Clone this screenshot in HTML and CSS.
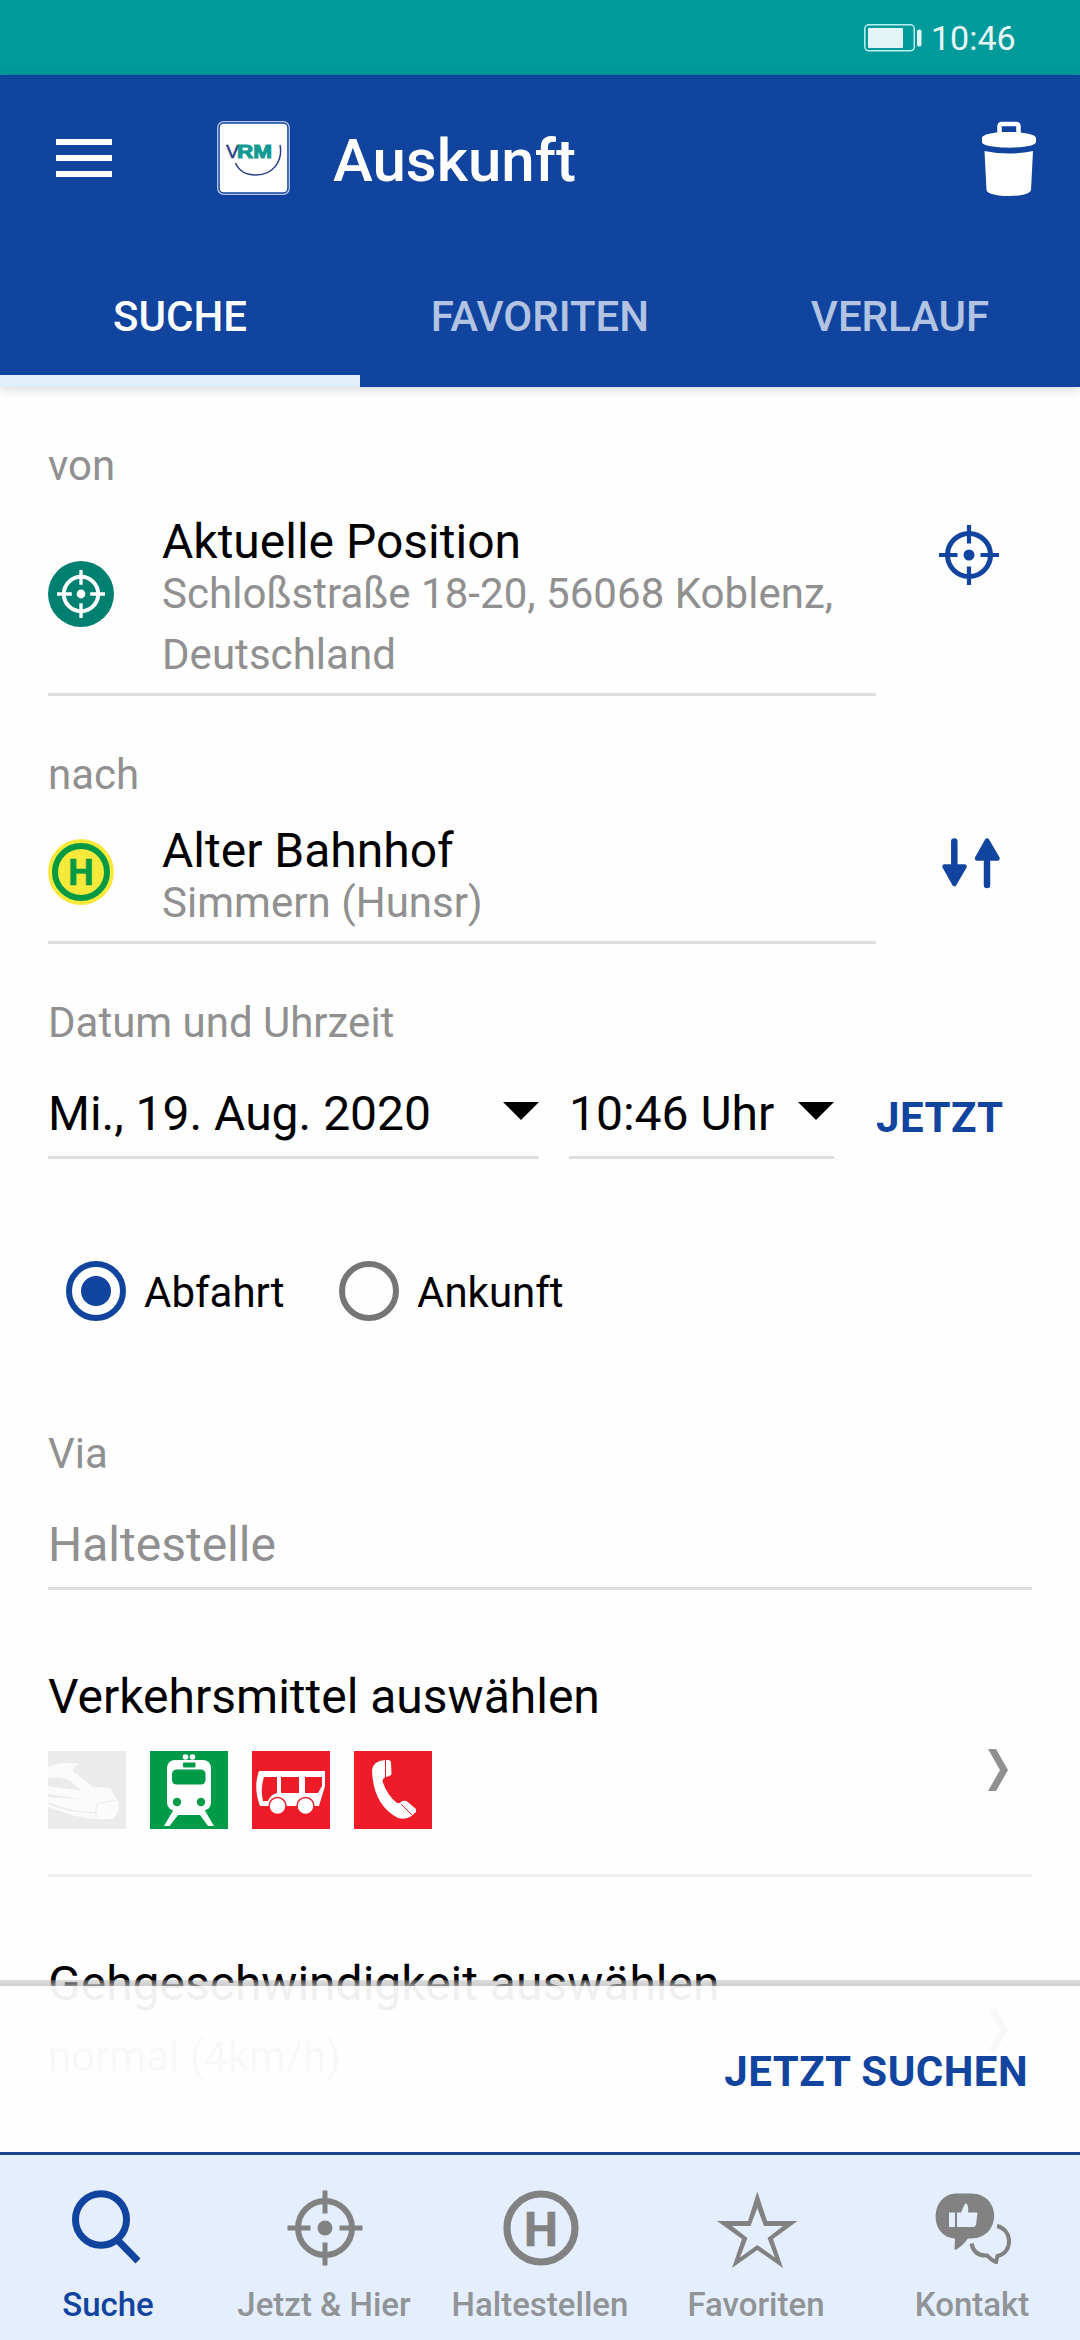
FILE: index.html
```html
<!DOCTYPE html>
<html lang="de">
<head>
<meta charset="utf-8">
<title>Auskunft</title>
<link rel="stylesheet" href="styles.css">
</head>
<body>
<svg width="0" height="0" class="defs">
  <symbol id="target" viewBox="0 0 60 60">
    <circle cx="30" cy="30" r="21.5" fill="none" stroke="currentColor" stroke-width="5"/>
    <circle cx="30" cy="30" r="5.5" fill="currentColor"/>
    <path d="M30 0v18.500M30 41.500V60M0 30h18.500M41.500 30H60" stroke="currentColor" stroke-width="4.200"/>
  </symbol>
  <symbol id="chevron" viewBox="0 0 20 42"><path d="M0 0h8l12 21-12 21H0l12-21z" fill="currentColor"/></symbol>
</svg>
<div class="phone">
  <div class="status">
    <svg width="55" height="28" viewBox="0 0 55 28">
      <rect x=".8" y=".8" width="49.500" height="26" rx="4" fill="none" stroke="#bdeeee" stroke-width="1.500"/>
      <rect x="4" y="4" width="35" height="20" rx="1" fill="#e3f5f5"/>
      <rect x="53" y="5.500" width="4.500" height="17" rx="2" fill="#e3f5f5"/>
    </svg>
    <span class="clock">10:46</span>
  </div>
  <header class="header">
    <div class="toolbar">
      <div class="menu"><i></i><i></i><i></i></div>
      <svg class="logo" width="73" height="74" viewBox="0 0 73 74">
        <rect x=".7" y=".7" width="71.600" height="72.600" rx="6" fill="#11449f" stroke="#b9c6e6" stroke-width="1.300"/>
        <rect x="2.800" y="2.800" width="67.400" height="68.400" rx="4" fill="#fff"/>
        <text x="9" y="37.200" class="logo-v" textLength="13" lengthAdjust="spacingAndGlyphs">V</text>
        <text x="20" y="37.200" class="logo-rm" textLength="35" lengthAdjust="spacingAndGlyphs">RM</text>
        <path d="M63 24C66 39 57 54 39 54 30 54 22 50 18.500 42" fill="none" stroke="#2c3f86" stroke-width="1.500"/>
      </svg>
      <h1>Auskunft</h1>
      <svg class="trash" width="54" height="76" viewBox="0 0 54 76">
        <path d="M17.500 14V5.500Q17.500 3 20 3h14q2.500 0 2.500 2.500V14" fill="none" stroke="#fff" stroke-width="4.500"/>
        <path d="M0 17C0 9 54 9 54 17v4C54 28.500 0 28.500 0 21z" fill="#fff"/>
        <path d="M2.500 30Q27 35 51 30L49 69C48 77 6 77 4.500 69z" fill="#fff"/>
      </svg>
    </div>
    <nav class="tabs">
      <span class="tab active">SUCHE</span><span class="tab">FAVORITEN</span><span class="tab">VERLAUF</span>
    </nav>
  </header>
  <main class="form">
    <label>von</label>
    <div class="row">
      <div class="field">
        <svg class="pin" width="66" height="66" viewBox="0 0 66 66"><circle cx="33" cy="33" r="33" fill="#008070"/><use href="#target" x="9" y="9" width="48" height="48" color="#fff"/></svg>
        <div><div class="title">Aktuelle Position</div><div class="sub">Schloßstraße 18-20, 56068 Koblenz, Deutschland</div></div>
      </div>
      <svg class="side" width="60" height="60"><use href="#target"/></svg>
    </div>
    <label>nach</label>
    <div class="row">
      <div class="field">
        <svg class="pin" width="66" height="66" viewBox="0 0 66 66"><circle cx="33" cy="33" r="33" fill="#f9e93b"/><circle cx="33" cy="33" r="26" fill="none" stroke="#009a44" stroke-width="6"/><text x="33" y="46" class="h-green">H</text></svg>
        <div><div class="title">Alter Bahnhof</div><div class="sub">Simmern (Hunsr)</div></div>
      </div>
      <svg class="side" width="60" height="60" viewBox="0 0 60 60" fill="#11449f" stroke="#11449f" stroke-linecap="round" stroke-linejoin="round">
        <path d="M15.300 7.500v22M48 51V28" stroke-width="6.500"/>
        <path d="M5.500 32.500h20L15.300 50zM38 24.500h20.500L48 6.500z" stroke-width="4.500"/>
      </svg>
    </div>
    <label>Datum und Uhrzeit</label>
    <div class="when">
      <div class="select date">Mi., 19. Aug. 2020<i class="caret"></i></div>
      <div class="select time">10:46 Uhr<i class="caret"></i></div>
      <span class="now">JETZT</span>
    </div>
    <div class="radios">
      <div class="radio on"><i></i><span>Abfahrt</span></div>
      <div class="radio"><i></i><span>Ankunft</span></div>
    </div>
    <label>Via</label>
    <div class="via">Haltestelle</div>
    <section class="option">
      <div>
        <div class="heading">Verkehrsmittel auswählen</div>
        <div class="modes">
          <svg viewBox="0 0 78 78"><path d="M0 0h78v78H0z" fill="#ebebeb"/><path d="M0 16C9 12 20 11 32 13L28 15Q24 17 25 20L45 36 62 37 70 50Q73 63 64 68 38 69 20 63L0 56z" fill="#fbfbfb"/><path d="M0 27Q17 25 26 33L34 40 0 35zM0 43L40 49H43L0 46zM0 51Q24 61 47 61L47 62.500Q22 62 0 53z" fill="#ebebeb"/><path d="M68 49L52 52Q48 53 48 57V67" fill="none" stroke="#ebebeb" stroke-width="1.200"/></svg>
          <svg viewBox="0 0 78 78"><path d="M0 0h78v78H0z" fill="#009b48"/><g fill="#fff"><circle cx="35.500" cy="6" r="2.800"/><circle cx="42.500" cy="6" r="2.800"/><rect x="17" y="9" width="44" height="50.500" rx="8"/><path d="M24 58h30L64 75h-6l-8-11H28l-8.500 11H14z"/></g><g fill="#009b48"><rect x="33" y="11.500" width="12.500" height="5" rx="1"/><rect x="22" y="18.500" width="33.500" height="15" rx="4.500"/><circle cx="27" cy="51" r="4.200"/><circle cx="51" cy="51" r="4.200"/></g></svg>
          <svg viewBox="0 0 78 78"><path d="M0 0h78v78H0z" fill="#ee1c28"/><path d="M7 20h66v15l-6 20H8Q1 36 7 20z" fill="#fff"/><path d="M12 26h13v16q-6 1-9 8h-5Q8 38 12 26zM29 26h18v16H29zM53 26h17v9l-4 7H53z" fill="#ee1c28"/><g fill="#fff" stroke="#ee1c28" stroke-width="1.500"><circle cx="25.500" cy="55" r="8.500"/><circle cx="53.500" cy="55" r="8.500"/></g></svg>
          <svg viewBox="0 0 78 78"><path d="M0 0h78v78H0z" fill="#ee1c28"/><path d="M31 9h3q3 0 3 3l.5 11q-.5 2-6 3-3 1-3 4.500 5 14 14 21 3 2 5-1 2-1 5-.5l9.500 8v3Q54 70 44 67 19 54 18 19 19 10 31 9z" fill="#fff"/><path d="M31.500 9v17M47.500 53.500l11 11" stroke="#ee1c28" stroke-width="1"/></svg>
        </div>
      </div>
      <svg class="chev" width="20" height="42"><use href="#chevron"/></svg>
    </section>
    <section class="option speed">
      <div><div class="heading">Gehgeschwindigkeit auswählen</div><div class="value">normal (4km/h)</div></div>
      <svg class="chev" width="20" height="42"><use href="#chevron"/></svg>
    </section>
  </main>
  <footer class="footer">
    <div class="edge"></div>
    <div class="actions"><span>JETZT SUCHEN</span></div>
    <nav class="bottom">
      <div class="item current"><svg viewBox="0 0 80 80"><ellipse cx="33" cy="31.500" rx="25.500" ry="25.700" fill="none" stroke="currentColor" stroke-width="7"/><path d="M49 51.500L70 73" stroke="currentColor" stroke-width="7"/></svg><span>Suche</span></div>
      <div class="item"><svg viewBox="0 0 80 80"><g stroke="currentColor" fill="none"><circle cx="41" cy="40" r="27" stroke-width="6"/><path d="M41 2.500v23M41 54.500v23M3.500 40h23M55.500 40h23" stroke-width="5"/></g><circle cx="41" cy="40" r="7.500" fill="currentColor"/></svg><span>Jetzt &amp; Hier</span></div>
      <div class="item"><svg viewBox="0 0 80 80"><circle cx="41" cy="40" r="34" fill="none" stroke="currentColor" stroke-width="7.200"/><text x="41" y="57.500" class="h-grey">H</text></svg><span>Haltestellen</span></div>
      <div class="item"><svg viewBox="0 0 80 80"><path fill="currentColor" fill-rule="evenodd" d="M41.300 3.500L51 33h30.500L57 51l10 29-25.700-18L16 80l10-29L1 33h31zM41.300 20L34.500 38H16L31.500 50 24 69.500 41.300 57 59 69.500 51.500 50 67 38H48z"/></svg><span>Favoriten</span></div>
      <div class="item"><svg viewBox="0 0 80 80"><path d="M24 5.500h15C70 5.500 70 50.500 39 50.500h-3Q29 60 22.500 62L23 50.500C-4 49 -2 6 24 5.500z" fill="currentColor"/><path d="M17 24.500h6v14.500h-6zM25 24.500h4l4-9q4-.5 3 9h9.500L44 37l-2 2H25z" fill="#e5eefd"/><path d="M65 38C80 41 82 64 65.500 68l-1.500 6q-2 0-9-6.500C45 68 41 63 39.500 55.500" fill="none" stroke="currentColor" stroke-width="4"/></svg><span>Kontakt</span></div>
    </nav>
  </footer>
</div>
</body>
</html>
```
FILE: styles.css
```css
* { box-sizing: border-box; }
body { margin: 0; font-family: Roboto, "Noto Sans", sans-serif; background: #fefefe; }
svg { display: block; flex: none; overflow: visible; }
.defs { position: absolute; }
.phone { position: relative; width: 1080px; height: 2340px; overflow: hidden; background: #fefefe; color: #000; }

.status { height: 75px; background: #009a9b; display: flex; justify-content: flex-end; align-items: center; gap: 12px; padding-right: 64px; }
.clock { color: #e8f8f8; font-size: 34px; line-height: 75px; padding-top: 2px; width: 85px; white-space: nowrap; }

.header { height: 312px; background: #11449f; color: #fff; box-shadow: 0 2px 10px rgba(0, 0, 0, .16); }
.toolbar { height: 168px; display: flex; align-items: flex-start; padding: 46px 44px 0 56px; }
.menu { width: 56px; display: flex; flex-direction: column; gap: 10px; padding-top: 18px; }
.menu i { height: 6px; background: #fff; }
.logo { margin-left: 105px; }
.logo-v { font: 18px "Liberation Sans", sans-serif; fill: #2c3f86; stroke: #2c3f86; stroke-width: .5px; }
.logo-rm { font: bold 18px "Liberation Sans", sans-serif; fill: #129a93; stroke: #129a93; stroke-width: 1px; }
h1 { margin: 0 0 0 43px; font-size: 60px; line-height: 80px; font-weight: 500; flex: 1; }
.tabs { display: grid; grid-template-columns: repeat(3, 1fr); height: 144px; }
.tab { text-align: center; font-size: 42px; font-weight: 500; line-height: 148px; color: #b3c3e2; height: 144px; }
.tab.active { color: #fff; border-bottom: 12px solid #e1effa; }

.form { padding: 54px 48px 0; }
label { display: block; font-size: 42px; line-height: 50px; color: #909090; }
.row { display: flex; align-items: flex-start; margin: 28px 0 54px; }
.field { width: 828px; display: flex; align-items: center; gap: 48px; padding-bottom: 8px; border-bottom: 3px solid #dedede; }
.pin { margin-bottom: 17px; }
.title { font-size: 48px; line-height: 42px; padding-top: 2px; }
.sub { font-size: 42px; line-height: 61px; color: #909090; letter-spacing: .04px; }
.side { margin: 6px 0 0 63px; color: #11449f; }
.h-green { font: bold 36px Roboto, sans-serif; fill: #009a44; stroke: #009a44; stroke-width: .6px; text-anchor: middle; }
.when { display: flex; margin-top: 38px; }
.select { display: flex; justify-content: space-between; height: 73px; font-size: 48px; line-height: 56px; border-bottom: 3px solid #dedede; white-space: nowrap; }
.date { width: 491px; margin-right: 30px; }
.time { width: 265px; margin-right: 42px; }
.caret { width: 36px; height: 18px; margin-top: 16px; background: #000; clip-path: polygon(0 0, 100% 0, 50% 100%); }
.now { color: #11449f; font-weight: 700; font-size: 42px; line-height: 63px; letter-spacing: .5px; }
.radios { display: flex; margin: 102px 0 108px 18px; }
.radio { width: 273px; display: flex; gap: 18px; font-size: 42px; line-height: 60px; }
.radio span { padding-top: 2px; height: 60px; }
.radio i { width: 60px; height: 60px; border: 6px solid #757575; border-radius: 50%; }
.radio.on i { border-color: #11449f; background: radial-gradient(circle, #11449f 14.5px, transparent 15.5px); }
.via { margin-top: 38px; height: 73px; font-size: 48px; line-height: 56px; color: #909090; border-bottom: 3px solid #dedede; }
.option { display: flex; justify-content: space-between; padding: 79px 24px 45px 0; border-bottom: 3px solid #efefef; }
.heading { font-size: 48px; line-height: 56px; }
.modes { display: flex; gap: 24px; margin-top: 26px; }
.modes svg { width: 78px; height: 78px; }
.chev { color: #909090; margin-top: 80px; }
.speed .chev { margin-top: 53px; }
.value { font-size: 42px; line-height: 50px; margin-top: 20px; color: #909090; }

.footer { position: absolute; left: 0; bottom: 0; width: 1080px; height: 360px; }
.edge { height: 6px; background: linear-gradient(rgba(160, 160, 160, .35), rgba(190, 190, 190, .75)); }
.actions { height: 166px; background: rgba(254, 254, 254, .945); display: flex; justify-content: flex-end; padding-right: 52px; color: #11449f; font-size: 42px; font-weight: 700; line-height: 171px; letter-spacing: .45px; }
.bottom { height: 188px; background: #e5eefd; border-top: 3px solid #174390; display: grid; grid-template-columns: repeat(5, 1fr); }
.item { display: flex; flex-direction: column; align-items: center; color: #828282; padding-top: 33px; }
.item svg { width: 80px; height: 80px; }
.item span { font-size: 33px; font-weight: 500; line-height: 40px; margin-top: 17px; color: #909496; white-space: nowrap; }
.item.current, .item.current span { color: #11449f; }
.h-grey { font: bold 48px Roboto, sans-serif; fill: currentColor; stroke: currentColor; stroke-width: .6px; text-anchor: middle; }
```
